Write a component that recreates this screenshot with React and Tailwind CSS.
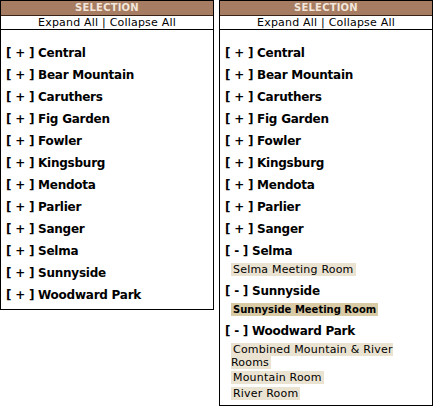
export default function App() {
  const names = ["Central","Bear Mountain","Caruthers","Fig Garden","Fowler","Kingsburg","Mendota","Parlier","Sanger","Selma","Sunnyside","Woodward Park"];
  const expanded = {
    Selma: [{ t: "Selma Meeting Room" }],
    Sunnyside: [{ t: "Sunnyside Meeting Room", sel: true }],
    "Woodward Park": [{ t: "Combined Mountain & River Rooms", wrap: true }, { t: "Mountain Room" }, { t: "River Room" }],
  };
  const Panel = ({ open }) => (
    <div className="w-[214px] border border-black bg-white">
      <div className="h-[15px] bg-[#a67c62] border-b border-[#3a2418] flex items-center justify-center text-[10px] font-bold tracking-[0.2px] text-[#f3e6da] leading-none">
        SELECTION
      </div>
      <div className="h-[14px] border-b border-black flex items-center justify-center text-[11px] tracking-[0.2px] text-black leading-none">
        Expand All | Collapse All
      </div>
      <div className={open ? "pt-[11px] pb-[2px]" : "pt-[11px] pb-[4px]"}>
        {names.map((n) => {
          const subs = open ? expanded[n] : null;
          return (
            <div key={n}>
              <div className="h-[22px] pt-[2px] flex items-center pl-[5px] text-[12px] font-bold tracking-[-0.25px] text-black whitespace-pre">
                {subs ? "[ - ] " : "[ + ] "}{n}
              </div>
              {subs && subs.map((s) => (
                <div key={s.t} className={s.wrap ? "my-[2px] pl-[11px] pr-[20px] text-[11px] leading-[13px]" : "my-[2px] pl-[11px] pr-[20px] text-[11px] leading-[14px]"}>
                  <span className={s.sel ? "bg-[#d8cba6] font-bold text-[10px] px-[2px] py-[1px]" : "bg-[#ebe3d2] px-[2px] tracking-[0.2px]"}>{s.t}</span>
                </div>
              ))}
            </div>
          );
        })}
      </div>
    </div>
  );
  return (
    <div className="w-[433px] h-[408px] bg-white flex items-start gap-[5px]" style={{ fontFamily: '"DejaVu Sans", Verdana, sans-serif' }}>
      <Panel open={false} />
      <Panel open={true} />
    </div>
  );
}
